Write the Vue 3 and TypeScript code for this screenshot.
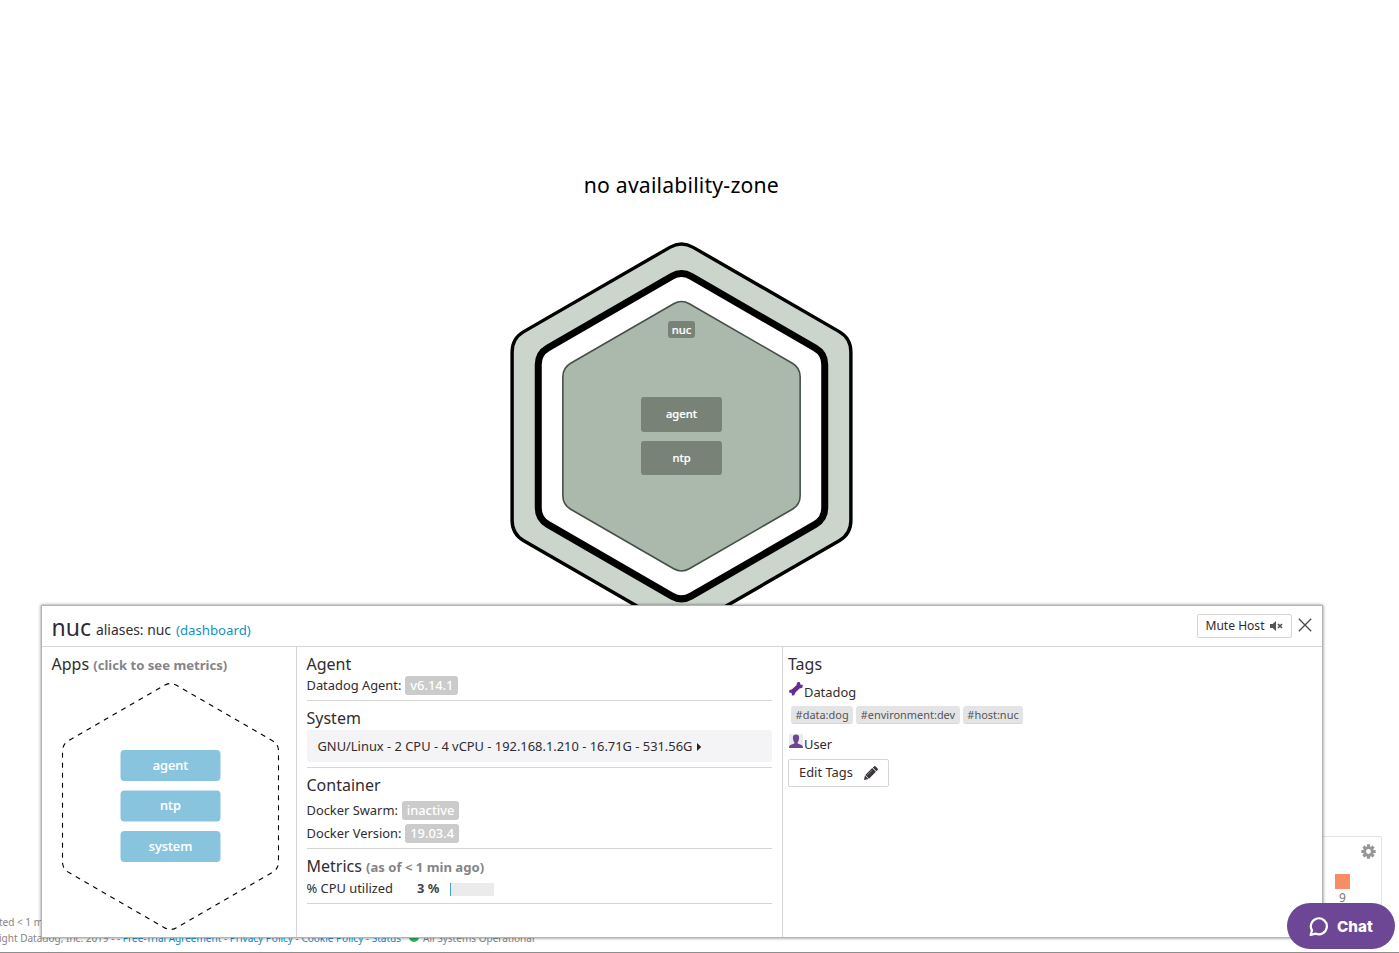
<script setup lang="ts">
interface Badge { label: string; value: string; gap: string }

// Pointy-top hexagon whose corners are softened over `d` pixels of each edge.
function hexPath(cx: number, cy: number, r: number, d: number): string {
  const pts = Array.from({ length: 6 }, (_, i) => {
    const a = (Math.PI / 3) * i - Math.PI / 2
    return { x: cx + r * Math.cos(a), y: cy + r * Math.sin(a) }
  })
  const t = d / r
  const parts = pts.map((p, i) => {
    const prev = pts[(i + 5) % 6]
    const next = pts[(i + 1) % 6]
    const sx = p.x + (prev.x - p.x) * t
    const sy = p.y + (prev.y - p.y) * t
    const ex = p.x + (next.x - p.x) * t
    const ey = p.y + (next.y - p.y) * t
    return `${i ? 'L' : 'M'}${sx.toFixed(2)} ${sy.toFixed(2)}Q${p.x.toFixed(2)} ${p.y.toFixed(2)} ${ex.toFixed(2)} ${ey.toFixed(2)}`
  })
  return parts.join('') + 'Z'
}

const outerHex = hexPath(681.5, 436.2, 195.6, 13.5)
const middleHex = hexPath(681.5, 436.2, 165.4, 11)
const innerHex = hexPath(681.5, 436.2, 137, 9)
const appsHex = hexPath(118.5, 133.5, 124.7, 7)

const hostApps = [
  { name: 'agent', y: 397, h: 35 },
  { name: 'ntp', y: 441, h: 34 },
]
const panelApps = [
  { name: 'agent', y: 77 },
  { name: 'ntp', y: 117.5 },
  { name: 'system', y: 158 },
]
const docker: Badge[] = [
  { label: 'Docker Swarm:', value: 'inactive', gap: 'first' },
  { label: 'Docker Version:', value: '19.03.4', gap: 'next' },
]
const tags = ['#data:dog', '#environment:dev', '#host:nuc']
const cpu = 3
</script>

<template>
  <div class="page">
    <svg class="map" width="1399" height="914" viewBox="0 0 1399 914">
      <text class="zone" x="681.3" y="193" text-anchor="middle" textLength="195">no availability-zone</text>
      <path :d="outerHex" fill="#cbd5cb" stroke="#000" stroke-width="3.4" />
      <path :d="middleHex" fill="#fff" stroke="#000" stroke-width="7" />
      <path :d="innerHex" fill="#aab9ac" stroke="#475048" stroke-width="1.6" />
      <rect x="668" y="321" width="27" height="17" rx="3" fill="#788277" />
      <text class="node" x="681.5" y="334" text-anchor="middle">nuc</text>
      <g v-for="app in hostApps" :key="app.name">
        <rect x="641" :y="app.y" width="81" :height="app.h" rx="3" fill="#788277" />
        <text class="node" x="681.5" :y="app.y + 21" text-anchor="middle">{{ app.name }}</text>
      </g>
    </svg>

    <footer class="footer">
      <div class="updated">ted &lt; 1 min ago</div>
      <div class="legal">
        <span class="copy">ight Datadog, Inc. 2019 - - </span><a>Free-Trial Agreement</a> - <a>Privacy Policy</a> - <a>Cookie Policy</a> - <a>Status</a>
        <i class="dot"></i><span>All Systems Operational</span>
      </div>
    </footer>

    <aside class="legend">
      <svg class="gear" width="15" height="15" viewBox="-7.5 -7.5 15 15">
        <g fill="#979797">
          <rect v-for="n in 4" :key="n" x="-1.6" y="-7.2" width="3.2" height="14.4" rx=".5" :transform="`rotate(${n * 45})`" />
          <circle r="5.3" />
        </g>
        <circle r="2.4" fill="#fff" />
      </svg>
      <div class="swatch"></div>
      <div class="count">9</div>
    </aside>

    <section class="panel">
      <header class="head">
        <div class="title">
          <span class="host">nuc</span><span class="alias">aliases: nuc</span><a class="dash">(dashboard)</a>
        </div>
        <button class="mute">
          <span>Mute Host</span>
          <svg width="13" height="10" viewBox="0 0 13 10">
            <path d="M0 3H2.6L6 0V10L2.6 7H0Z" fill="#555" />
            <path d="M8 3L12 7M12 3L8 7" stroke="#555" stroke-width="1.7" />
          </svg>
        </button>
        <svg class="close" width="14" height="14" viewBox="0 0 14 14">
          <path d="M.8.8L13.2 13.2M13.2.8L.8 13.2" stroke="#4a4a4a" stroke-width="1.3" />
        </svg>
      </header>
      <div class="body">
        <div class="apps">
          <h3>Apps <b>(click to see metrics)</b></h3>
          <svg class="apps-map" width="237" height="258" viewBox="0 0 237 258">
            <path :d="appsHex" fill="none" stroke="#000" stroke-width="1.1" stroke-dasharray="5 5" />
            <g v-for="app in panelApps" :key="app.name">
              <rect x="68.5" :y="app.y" width="100" height="31" rx="4" fill="#89c4df" />
              <text class="app" x="118.5" :y="app.y + 19.5" text-anchor="middle">{{ app.name }}</text>
            </g>
          </svg>
        </div>

        <div class="info">
          <div class="block agent">
            <h3>Agent</h3>
            <div class="row"><span>Datadog Agent:</span><em>v6.14.1</em></div>
          </div>
          <div class="block system">
            <h3>System</h3>
            <div class="platform">
              <span>GNU/Linux - 2 CPU - 4 vCPU - 192.168.1.210 - 16.71G - 531.56G</span>
              <svg width="5" height="8" viewBox="0 0 5 8"><path d="M0 0L4.2 4L0 8Z" fill="#222" /></svg>
            </div>
          </div>
          <div class="block container">
            <h3>Container</h3>
            <div v-for="d in docker" :key="d.label" class="row" :class="d.gap"><span>{{ d.label }}</span><em>{{ d.value }}</em></div>
          </div>
          <div class="block metrics">
            <h3>Metrics <b>(as of &lt; 1 min ago)</b></h3>
            <div class="cpu">
              <span class="cpu-name">% CPU utilized</span>
              <strong>{{ cpu }} %</strong>
              <div class="meter"><div class="fill" :style="{ width: cpu + '%' }"></div></div>
            </div>
          </div>
        </div>

        <div class="tags">
          <h3>Tags</h3>
          <div class="source datadog">
            <svg width="14" height="14" viewBox="0 0 14 14">
              <path d="M9 0L11 .3L11.3 2.6L13.8 3L13.4 5.8L10.6 6.4L6.4 10.4L5.2 13.2L3 13.4L2.6 11L.2 10.6L.2 8.2L3 7.2L7.4 3.2L8 1Z" fill="#632d91" />
            </svg>
            <span>Datadog</span>
          </div>
          <div class="chips"><span v-for="tag in tags" :key="tag" class="chip">{{ tag }}</span></div>
          <div class="source user">
            <svg width="14" height="14" viewBox="0 0 14 14">
              <rect width="14" height="14" fill="#ebebeb" />
              <path d="M7 .5C9.4.5 10.3 2 10.1 4.3C10 6.2 9.2 7.6 8.6 8.4L8.7 9.6L12.6 11.1Q14 11.8 14 14H0Q0 11.8 1.4 11.1L5.3 9.6L5.4 8.4C4.8 7.6 4 6.2 3.9 4.3C3.7 2 4.6.5 7 .5Z" fill="#6c4594" />
            </svg>
            <span>User</span>
          </div>
          <button class="edit">
            <span>Edit Tags</span>
            <svg width="14" height="14" viewBox="0 0 14 14" fill="#38343a">
              <path d="M0 14L.9 9.6L4.4 13.1ZM1.3 9L8.2 2.1L11.9 5.8L5 12.7ZM8.8 1.6L10 .4Q10.8-.3 11.6.4L13.6 2.4Q14.3 3.2 13.6 4L12.4 5.2Z" />
              <path d="M3 9.3L8.2 4.1" stroke="#aaa" stroke-width=".7" />
            </svg>
          </button>
        </div>
      </div>
    </section>

    <div class="bottom-rule"></div>

    <button class="chat">
      <svg width="20" height="21" viewBox="0 0 20 21" fill="none" stroke="#fff" stroke-width="2.2" stroke-linejoin="round">
        <path d="M1.6 19L3 14.4A8 8 0 1 1 6.6 17.6Z" />
      </svg>
      <span>Chat</span>
    </button>
  </div>
</template>

<style>
body { margin: 0; background: #fff; overflow: hidden; }
</style>

<style scoped>
.page {
  position: relative; width: 1399px; height: 953px; overflow: hidden;
  font-family: "Noto Sans", sans-serif; font-size: 12.88px; color: #2f2d31; background: #fff;
}
.page * { box-sizing: border-box; }
.map { display: block; }
.zone { font-size: 21.2px; fill: #000; }
.node { font-size: 11.2px; font-weight: 500; fill: #fff; stroke: #fff; stroke-width: .2px; }
a { color: #1090c8; }
button { font: inherit; color: inherit; margin: 0; }

.footer { margin-left: -1px; font-size: 10.02px; line-height: 16px; color: #858585; white-space: nowrap; }
.legal { display: flex; white-space: pre; align-items: center; }
.dot { width: 10px; height: 10px; border-radius: 50%; background: #2bb35c; margin: -2px 4px 0 8px; }

.legend {
  position: absolute; left: 1302px; top: 836px; width: 80px; height: 100px;
  border: 1px solid #e4e4e4; border-radius: 2px; background: #fff;
}
.gear { display: block; margin: 7px 0 0 58px; }
.swatch { width: 15px; height: 15px; margin: 15px 0 0 32px; background: #f68d64; }
.count { width: 15px; margin: 1px 0 0 32px; font-size: 12px; line-height: 16px; text-align: center; color: #777; }

.panel {
  position: absolute; left: 41px; top: 605px; width: 1282px; height: 333px;
  display: flex; flex-direction: column;
  background: #fff; border: 1px solid #b4b4b4; box-shadow: 0 0 3px rgba(0, 0, 0, .5);
}
.head { display: flex; height: 41px; flex: none; border-bottom: 1px solid #d5d4d8; }
.title { display: flex; flex: 1; padding-left: 9.5px; line-height: 42px; white-space: nowrap; }
.host { font-size: 23px; margin-right: 5px; }
.alias { font-size: 13.9px; margin-right: 5px; padding-top: 3px; }
.dash { font-size: 13.2px; padding-top: 3px; }
.mute {
  display: flex; align-items: center; width: 95px; height: 24px; margin-top: 8px; padding: 0 7px 1px 7.5px;
  border: 1px solid #d5d5d8; border-radius: 2px; background: #fff; font-size: 12.05px; white-space: nowrap;
}
.mute svg { margin: 1px 0 0 6px; flex: none; }
.close { margin: 12px 10px 0 6px; }
.body { display: flex; flex: 1; min-height: 0; }
h3 { margin: 0; font-size: 16px; font-weight: 400; line-height: 22px; white-space: nowrap; }
h3 b { font-size: 13.1px; font-weight: 700; color: #858489; }

.apps { width: 255px; padding: 6px 0 0 10px; border-right: 1px solid #d5d4d8; }
.apps h3 { margin-left: -.5px; }
.apps-map { display: block; margin-top: -3px; }
.app { font-size: 12.8px; font-weight: 500; fill: #fff; stroke: #fff; stroke-width: .15px; }

.info { width: 486px; padding: 6px 10px 0 10px; border-right: 1px solid #d5d4d8; }
.block { border-bottom: 1px solid #d5d5d5; }
.block h3 { margin-left: -.5px; }
.agent { height: 48px; }
.agent .row { margin-top: 1px; }
.system { height: 67px; padding-top: 6px; }
.container { height: 81px; padding-top: 6px; }
.metrics { height: 55px; padding-top: 6px; }
.row { display: flex; height: 19px; line-height: 18px; margin-left: -.5px; white-space: nowrap; }
.row em {
  height: 19px; line-height: 18px; margin-left: 4px; padding: 0 4.8px;
  border-radius: 3px; background: #cbcbcb; color: #fff; font-style: normal; font-weight: 500;
}
.row.first { margin-top: 5px; }
.row.next { margin-top: 4px; }
.platform {
  display: flex; align-items: center; height: 32px; margin-top: 1px; padding: 0 10.5px;
  border-radius: 3px; background: #f4f3f5; white-space: nowrap;
}
.platform svg { margin: 1px 0 0 5px; }
.cpu { display: flex; align-items: center; height: 20px; white-space: nowrap; }
.cpu-name { width: 110.5px; margin-left: -.5px; }
.cpu strong { width: 33px; color: #444; }
.meter { width: 44px; height: 13px; margin-top: 2px; background: #ebebeb; }
.fill { height: 13px; background: #3ba3d0; }

.tags { flex: 1; padding: 6px 0 0 5px; }
.source { display: flex; gap: 1px; height: 20px; line-height: 20px; padding-left: 1px; }
.datadog { margin-top: 7px; }
.chips { display: flex; gap: 3px; margin: 4px 0 0 3px; }
.chip {
  height: 18px; padding: 0 4.6px; line-height: 17px; font-size: 10.95px; color: #555;
  border-radius: 3px; background: #e4e4e6; border-bottom: 1px solid #d8d8da; white-space: nowrap;
}
.user { margin-top: 10px; }
.edit {
  display: flex; align-items: center; width: 101px; height: 28px; margin-top: 5px; padding: 0 10px 1px;
  border: 1px solid #d5d5d8; border-radius: 2px; background: #fff; white-space: nowrap;
}
.edit span { margin-top: -1px; }
.edit svg { margin-left: auto; }

.bottom-rule { position: absolute; left: 0; right: 0; bottom: 0; height: 1px; background: #8e8e8e; }
.chat {
  position: absolute; left: 1287px; top: 903px; width: 108px; height: 46px; padding: 0 0 0 22px;
  display: flex; align-items: center; gap: 8px; border: 0; border-radius: 23px;
  background: #6d4696; color: #fff; font-family: Inter, sans-serif; font-size: 15.2px; font-weight: 800;
}
</style>
